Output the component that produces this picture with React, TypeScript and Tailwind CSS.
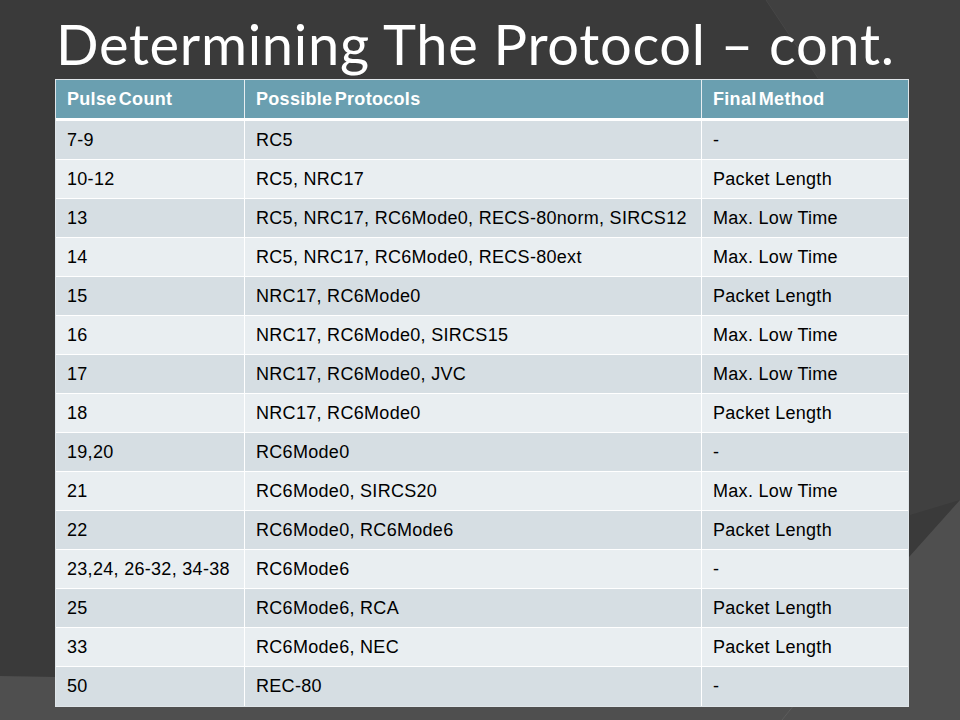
import React from 'react'

const rows: [string, string, string][] = [
  ['7-9', 'RC5', '-'],
  ['10-12', 'RC5, NRC17', 'Packet Length'],
  ['13', 'RC5, NRC17, RC6Mode0, RECS-80norm, SIRCS12', 'Max. Low Time'],
  ['14', 'RC5, NRC17, RC6Mode0, RECS-80ext', 'Max. Low Time'],
  ['15', 'NRC17, RC6Mode0', 'Packet Length'],
  ['16', 'NRC17, RC6Mode0, SIRCS15', 'Max. Low Time'],
  ['17', 'NRC17, RC6Mode0, JVC', 'Max. Low Time'],
  ['18', 'NRC17, RC6Mode0', 'Packet Length'],
  ['19,20', 'RC6Mode0', '-'],
  ['21', 'RC6Mode0, SIRCS20', 'Max. Low Time'],
  ['22', 'RC6Mode0, RC6Mode6', 'Packet Length'],
  ['23,24, 26-32, 34-38', 'RC6Mode6', '-'],
  ['25', 'RC6Mode6, RCA', 'Packet Length'],
  ['33', 'RC6Mode6, NEC', 'Packet Length'],
  ['50', 'REC-80', '-'],
]

function Backdrop() {
  return (
    <svg className="absolute inset-0" width="960" height="720" viewBox="0 0 960 720">
      <rect width="960" height="720" fill="#3a3a3a" />
      <polygon points="766,0 960,0 960,500 910,515 818,78" fill="#404040" />
      <polygon points="0,676 790,690 960,500 960,720 0,720" fill="#4f4f4f" />
      <line x1="766" y1="0" x2="818" y2="78" stroke="#474747" strokeWidth="1" />
      <line x1="782" y1="720" x2="798" y2="700" stroke="#5c5c5c" strokeWidth="1" />
    </svg>
  )
}

export default function App() {
  return (
    <div className="relative w-[960px] h-[720px] overflow-hidden font-['Liberation_Sans',Arial,sans-serif]">
      <Backdrop />
      <div className="relative flex flex-col pl-[55px] pt-[10px]">
        <h1 className="h-[69px] pl-[1px] font-['Lato',sans-serif] text-[56px] leading-[68px] tracking-[0.7px] text-white whitespace-nowrap">
          Determining The Protocol – cont.
        </h1>

        <div className="w-[854px] border border-[#dfe5e9]">
          <div className="grid grid-cols-[188px_457px_207px] h-[41px] bg-[#6a9fb0] border-b-[3px] border-white text-[18px] tracking-[0.3px] [word-spacing:-3px] font-bold text-white">
            <div className="flex items-center pl-[11px]">Pulse Count</div>
            <div className="flex items-center pl-[11px] border-l border-[#e8eef1]">Possible Protocols</div>
            <div className="flex items-center pl-[11px] border-l border-[#e8eef1]">Final Method</div>
          </div>
          {rows.map((r, i) => (
            <div
              key={i}
              className={`grid grid-cols-[188px_457px_207px] h-[39px] text-[18px] tracking-[0.3px] text-black ${
                i % 2 === 0 ? 'bg-[#d6dee3]' : 'bg-[#e9eef1]'
              } ${i < rows.length - 1 ? 'border-b border-white' : ''}`}
            >
              <div className="flex items-center pl-[11px]">{r[0]}</div>
              <div className="flex items-center pl-[11px] border-l border-white">{r[1]}</div>
              <div className="flex items-center pl-[11px] border-l border-white">{r[2]}</div>
            </div>
          ))}
        </div>
      </div>
    </div>
  )
}
